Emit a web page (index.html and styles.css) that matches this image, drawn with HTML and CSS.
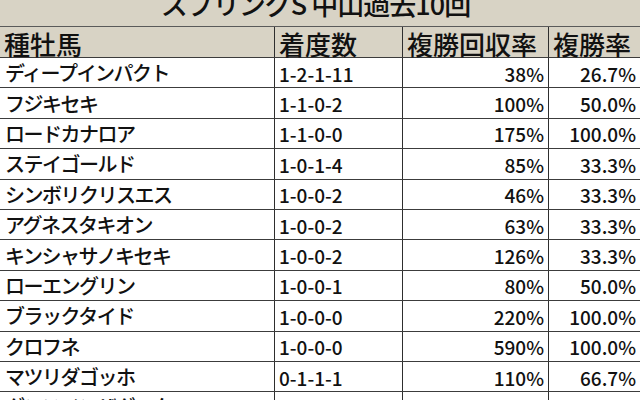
FILE: index.html
```html
<!DOCTYPE html>
<html lang="ja">
<head>
<meta charset="utf-8">
<link rel="stylesheet" href="styles.css">
</head>
<body>
<div class="page">
  <div class="title"><div class="title-text">スプリングS 中山過去10回</div></div>
  <div class="table">
    <div class="row head">
      <div class="cell c1">種牡馬</div>
      <div class="cell c2">着度数</div>
      <div class="cell c3">複勝回収率</div>
      <div class="cell c4">複勝率</div>
    </div>
    <div class="row"><div class="cell c1">ディープインパクト</div><div class="cell c2">1-2-1-11</div><div class="cell c3 num">38%</div><div class="cell c4 num">26.7%</div></div>
    <div class="row"><div class="cell c1">フジキセキ</div><div class="cell c2">1-1-0-2</div><div class="cell c3 num">100%</div><div class="cell c4 num">50.0%</div></div>
    <div class="row"><div class="cell c1">ロードカナロア</div><div class="cell c2">1-1-0-0</div><div class="cell c3 num">175%</div><div class="cell c4 num">100.0%</div></div>
    <div class="row"><div class="cell c1">ステイゴールド</div><div class="cell c2">1-0-1-4</div><div class="cell c3 num">85%</div><div class="cell c4 num">33.3%</div></div>
    <div class="row"><div class="cell c1">シンボリクリスエス</div><div class="cell c2">1-0-0-2</div><div class="cell c3 num">46%</div><div class="cell c4 num">33.3%</div></div>
    <div class="row"><div class="cell c1">アグネスタキオン</div><div class="cell c2">1-0-0-2</div><div class="cell c3 num">63%</div><div class="cell c4 num">33.3%</div></div>
    <div class="row"><div class="cell c1">キンシャサノキセキ</div><div class="cell c2">1-0-0-2</div><div class="cell c3 num">126%</div><div class="cell c4 num">33.3%</div></div>
    <div class="row"><div class="cell c1">ローエングリン</div><div class="cell c2">1-0-0-1</div><div class="cell c3 num">80%</div><div class="cell c4 num">50.0%</div></div>
    <div class="row"><div class="cell c1">ブラックタイド</div><div class="cell c2">1-0-0-0</div><div class="cell c3 num">220%</div><div class="cell c4 num">100.0%</div></div>
    <div class="row"><div class="cell c1">クロフネ</div><div class="cell c2">1-0-0-0</div><div class="cell c3 num">590%</div><div class="cell c4 num">100.0%</div></div>
    <div class="row"><div class="cell c1">マツリダゴッホ</div><div class="cell c2">0-1-1-1</div><div class="cell c3 num">110%</div><div class="cell c4 num">66.7%</div></div>
    <div class="row"><div class="cell c1">ダンスインザダーク</div><div class="cell c2">0-1-0-2</div><div class="cell c3 num">78%</div><div class="cell c4 num">33.3%</div></div>
  </div>
</div>
</body>
</html>
```

FILE: styles.css
```css
html, body {
  margin: 0;
  padding: 0;
  background: #ffffff;
}
body {
  width: 640px;
  height: 400px;
  overflow: hidden;
  font-family: "Noto Sans CJK JP", "Noto Sans", sans-serif;
  font-weight: 500;
  color: #111111;
}
.page {
  width: 641px;
}
.title {
  height: 26px;
  overflow: hidden;
  background: #d8d3c5;
  padding-right: 10px;
  text-align: center;
}
.title-text {
  font-size: 27px;
  line-height: 27px;
  letter-spacing: -1px;
  margin-top: -10px;
}
.table {
  display: flex;
  flex-direction: column;
}
.row {
  display: grid;
  grid-template-columns: 275px 128px 146px 92px;
  height: 30.4px;
  box-sizing: border-box;
  border-bottom: 1px solid #3c3c3c;
  background: #ffffff;
}
.row.head {
  height: 32px;
  border-top: 1px solid #5a5a5a;
  background: #d8d3c5;
}
.cell {
  box-sizing: border-box;
  border-right: 1px solid #2e2e2e;
  display: flex;
  align-items: center;
  white-space: nowrap;
  font-size: 19px;
  line-height: 1;
  padding-left: 4px;
  padding-top: 1px;
}
.c1 {
  font-size: 20px;
  letter-spacing: -1.5px;
  padding-left: 5px;
}
.head .cell {
  font-size: 26px;
  letter-spacing: 0;
  padding-top: 3px;
}
.head .c1 {
  padding-left: 4px;
}
.num {
  justify-content: flex-end;
  padding-left: 0;
  padding-right: 4px;
}
```
